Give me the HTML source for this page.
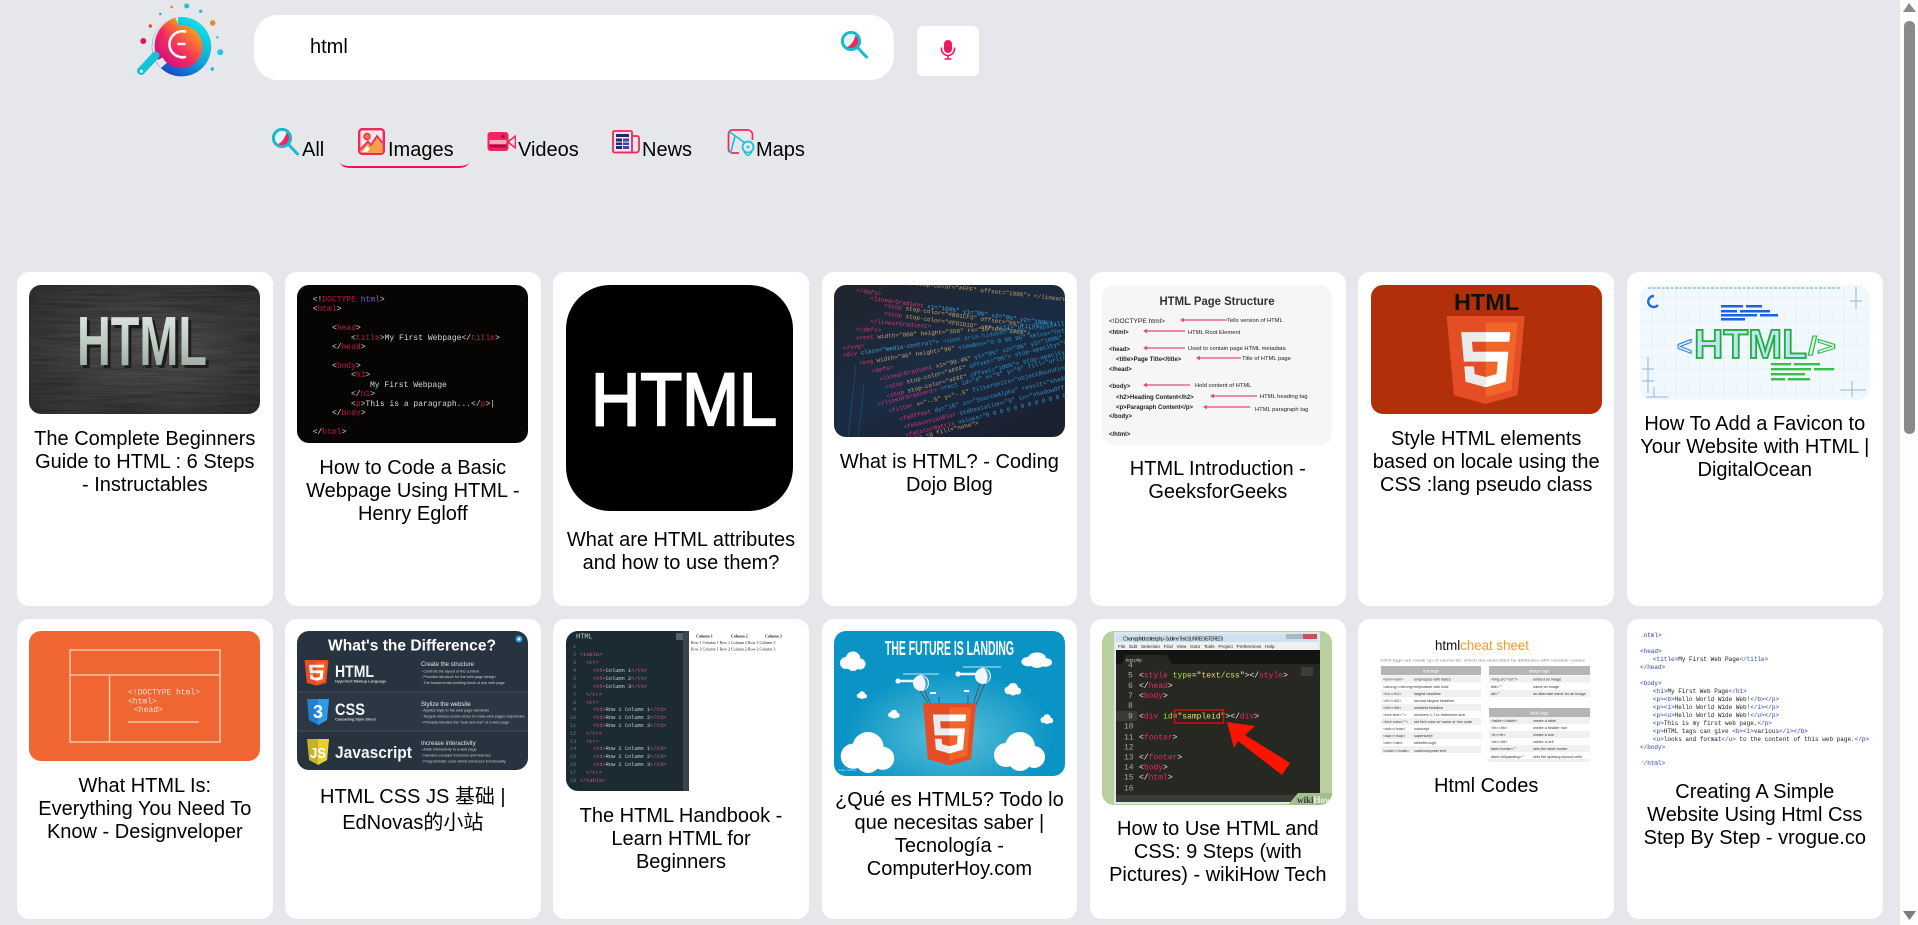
<!DOCTYPE html>
<html lang="en">
<head>
<meta charset="utf-8">
<title>html - Images</title>
<style>
*{box-sizing:border-box}
html,body{margin:0;padding:0;width:1918px;height:925px;overflow:hidden;background:#e5e7eb}
body{position:relative;font-family:"Liberation Sans","Noto Sans CJK SC",sans-serif;color:#000}
.abs{position:absolute}
.card{position:absolute;width:255.6px;background:#fff;border-radius:12px}
.r1{top:272px;height:334px}
.r2{top:619px;height:300px}
.t{position:absolute;display:block;border-radius:12px;overflow:hidden;filter:blur(.3px)}
.cap{position:absolute;width:255.6px;margin:0;text-align:center;font-size:20px;line-height:23px;white-space:nowrap;color:#000}
.tab{position:absolute;font-size:20px;line-height:23px;top:139px;white-space:nowrap;color:#000}
</style>
</head>
<body>
<svg width="0" height="0" style="position:absolute">
<defs>
<g id="h5">
<path fill="#E44D26" d="M71,460 L30,0 481,0 440,460 255,512"/>
<path fill="#F16529" d="M256,472 L405,431 440,37 256,37"/>
<path fill="#EBEBEB" d="M256,208 L181,208 176,150 256,150 256,94 255,94 114,94 115,109 129,265 256,265zM256,355 L255,355 192,338 188,293 158,293 132,293 139,382 255,414 256,414z"/>
<path fill="#FFF" d="M255,208 L255,265 325,265 318,338 255,355 255,414 371,382 372,372 385,223 387,208 371,208zM255,94 L255,150 392,150 393,138 396,109 397,94z"/>
</g>
<g id="cl"><circle cx="-7" cy="2" r="6" fill="#fff"/><circle cx="0" cy="-2" r="7.5" fill="#fff"/><circle cx="7" cy="3" r="5.5" fill="#fff"/><circle cx="0" cy="4" r="6" fill="#fff"/></g>
<g id="lens">
<circle cx="10" cy="10" r="8.6" fill="#e4f3f5"/>
<path d="M15 3A8.6 8.6 0 0 1 12 18.4 8 8 0 0 1 5 16.5 C10 15 13.5 9 15 3Z" fill="#f2255f"/>
<circle cx="10" cy="10" r="8.6" fill="none" stroke="#1ab9cf" stroke-width="3"/>
<path d="M16.5 16.5 25.5 26" stroke="#1ab9cf" stroke-width="3" stroke-linecap="round"/>
</g>
<linearGradient id="ringg" x1="0.85" y1="0.1" x2="0.25" y2="1"><stop offset="0" stop-color="#14e0e6"/><stop offset=".5" stop-color="#10a8d8"/><stop offset="1" stop-color="#1a3fc4"/></linearGradient>
<linearGradient id="leftg" x1="0.7" y1="0" x2="0.3" y2="1"><stop offset="0" stop-color="#f7941d"/><stop offset=".45" stop-color="#f5206a"/><stop offset="1" stop-color="#d1107a"/></linearGradient>
<linearGradient id="inng" x1="0.85" y1="0.1" x2="0.15" y2="0.9"><stop offset="0" stop-color="#f8a11e"/><stop offset=".55" stop-color="#f6305a"/><stop offset="1" stop-color="#d40f80"/></linearGradient>
<linearGradient id="silver" x1="0" y1="0" x2="0" y2="1"><stop offset="0" stop-color="#e8eee9"/><stop offset=".55" stop-color="#bcc8c0"/><stop offset="1" stop-color="#8d9a92"/></linearGradient>
<radialGradient id="gr1" cx=".5" cy=".5" r=".75"><stop offset="0" stop-color="#525252"/><stop offset="1" stop-color="#2c2c2c"/></radialGradient>
<radialGradient id="sky" cx=".5" cy=".72" r=".45"><stop offset="0" stop-color="#5cc0d8"/><stop offset="1" stop-color="#0a94c6"/></radialGradient>
<linearGradient id="cbg" x1="0" y1="0" x2=".7" y2="1"><stop offset="0" stop-color="#20242b"/><stop offset=".6" stop-color="#1a2c44"/><stop offset="1" stop-color="#1a2030"/></linearGradient>
<filter id="tx" x="0" y="0" width="100%" height="100%"><feTurbulence type="fractalNoise" baseFrequency=".015 .35" numOctaves="3" seed="4"/><feColorMatrix values="0 0 0 0 0  0 0 0 0 0  0 0 0 0 0  1.6 0 0 0 -.55"/></filter>
</defs>
</svg>

<!-- logo -->
<svg class="abs" style="left:120px;top:0" width="120" height="90" viewBox="0 0 120 90">
<circle cx="61.5" cy="46.7" r="29.7" fill="url(#ringg)"/>
<path d="M58 17 A30 30 0 0 0 41 68 L50 60 L58 30Z" fill="#e5e7eb"/>
<path d="M55.5 17.5 A30 30 0 0 0 38 60 L47 55 L60 30 Z" fill="url(#leftg)"/>
<path d="M35.5 55.5 L21 71" stroke="#14c3d6" stroke-width="8" stroke-linecap="round"/>
<circle cx="21.3" cy="71.3" r="1.5" fill="#fff"/>
<circle cx="61" cy="46.7" r="21.5" fill="url(#inng)"/>
<path d="M65 31.5 A13 13 0 1 0 65 57" fill="none" stroke="#fff" stroke-width="2.6" stroke-linecap="round"/>
<path d="M57.5 44 H65.5" stroke="#fff" stroke-width="2.4"/>
<circle cx="66.7" cy="6" r="2.5" fill="#16c4dc"/><circle cx="51.7" cy="7" r="1.4" fill="#e8892b"/><circle cx="40.3" cy="14" r="1.3" fill="#19b9cc"/><circle cx="80.7" cy="11.3" r="1.7" fill="#16c4dc"/><circle cx="92.7" cy="23" r="2.7" fill="#e08a20"/><circle cx="30.3" cy="26" r="1.7" fill="#ec4a2c"/><circle cx="23.3" cy="41" r="3" fill="#d81b60"/><circle cx="97.3" cy="37.3" r="1.2" fill="#2fb4c8"/><circle cx="100.3" cy="52.3" r="3" fill="#14cde0"/><circle cx="92.3" cy="69" r="1.7" fill="#14bcd4"/>
</svg>

<!-- search -->
<div class="abs" style="left:254px;top:15px;width:640px;height:65px;background:#fff;border-radius:24px"></div>
<div class="abs" style="left:310px;top:36px;font-size:20px;line-height:23px">html</div>
<svg class="abs" style="left:841px;top:31px" width="28" height="28" viewBox="0 0 28 28"><use href="#lens"/></svg>
<div class="abs" style="left:917px;top:26px;width:62px;height:50px;background:#fff;border-radius:6px"></div>
<svg class="abs" style="left:940px;top:39px" width="16" height="21" viewBox="0 0 16 21">
<rect x="4" y="1" width="8" height="13" rx="4" fill="#f5175f"/>
<path d="M1.5 8.5V10a6.5 6.5 0 0 0 13 0V8.5" fill="none" stroke="#f5175f" stroke-width="1.6"/>
<path d="M8 16.5V20M4.5 20H11.5" stroke="#f5175f" stroke-width="1.6"/>
</svg>

<!-- tabs -->
<svg class="abs" style="left:272px;top:128px" width="28" height="28" viewBox="0 0 28 28"><use href="#lens"/></svg>
<div class="tab" style="left:302px">All</div>
<svg class="abs" style="left:358px;top:128px" width="27" height="27" viewBox="0 0 27 27">
<rect x="1.2" y="1.2" width="24.6" height="24.6" rx="3" fill="#fbe8e2" stroke="#f0265f" stroke-width="2.4"/>
<circle cx="9" cy="8.5" r="3" fill="#f47a3c" stroke="#f0265f" stroke-width="1.4"/>
<path d="M3 22 10 14 13 17 19 8 24.5 16V25H3Z" fill="#f7a04a"/>
<path d="M2.5 21.5 10 13.5 13 17 19 8 24.5 15" fill="none" stroke="#f0265f" stroke-width="1.8"/>
<path d="M4 24 9 18 12 21 9 24Z" fill="#fff"/>
</svg>
<div class="tab" style="left:388px">Images</div>
<div class="abs" style="left:340px;top:150px;width:129px;height:18px;border-bottom:2.4px solid #f5105d;border-radius:0 0 10px 10px/0 0 6px 6px"></div>
<svg class="abs" style="left:487px;top:131px" width="29" height="21" viewBox="0 0 29 21">
<rect x="0.5" y="1" width="21" height="19" rx="3" fill="#f0265f"/>
<rect x="2.5" y="9" width="17" height="4" fill="#f7a9bd"/>
<rect x="2.5" y="14" width="17" height="2.5" fill="#a80f4a"/>
<circle cx="16" cy="5.5" r="1.7" fill="#a80f4a"/>
<path d="M22 10 28.5 5V17L22 12Z" fill="#fbe2e8" stroke="#f0265f" stroke-width="1.6"/>
</svg>
<div class="tab" style="left:518px">Videos</div>
<svg class="abs" style="left:612px;top:130px" width="28" height="24" viewBox="0 0 28 24">
<rect x="1" y="1" width="19" height="21.5" rx="1.5" fill="#fbe4ea" stroke="#f0265f" stroke-width="1.8"/>
<path d="M20 6H25A2 2 0 0 1 27 8V20A3 3 0 0 1 24 22.5H5" fill="none" stroke="#f0265f" stroke-width="1.8"/>
<rect x="4" y="4" width="13" height="3" fill="#1e2a78"/>
<rect x="4" y="8.5" width="6" height="10.5" fill="#1e2a78"/>
<rect x="11" y="8.5" width="6" height="10.5" fill="#3a4a9c"/>
<path d="M4 12H17M4 15.5H17" stroke="#fbe4ea" stroke-width="1"/>
</svg>
<div class="tab" style="left:642px">News</div>
<svg class="abs" style="left:727px;top:128px" width="28" height="28" viewBox="0 0 28 28">
<path d="M6 2H21A5 5 0 0 1 25.5 6V12M1.5 6A4 4 0 0 1 6 2M1.5 6V21A4 4 0 0 0 6 25H12" fill="none" stroke="#f0265f" stroke-width="1.7"/>
<path d="M1.5 3 18 15M8 8 3.5 25.5" fill="none" stroke="#1cc2da" stroke-width="1.7"/>
<circle cx="21" cy="19" r="5.5" fill="#e5e7eb" stroke="#1cc2da" stroke-width="1.8"/>
<circle cx="21" cy="19" r="1.4" fill="#1cc2da"/>
<path d="M17 24 21 28 25 24" fill="none" stroke="#1cc2da" stroke-width="1.4"/>
</svg>
<div class="tab" style="left:756px">Maps</div>

<!-- cards -->
<div class="card r1" style="left:17px"></div>
<div class="card r1" style="left:285px"></div>
<div class="card r1" style="left:553.2px"></div>
<div class="card r1" style="left:821.6px"></div>
<div class="card r1" style="left:1090px"></div>
<div class="card r1" style="left:1358.4px"></div>
<div class="card r1" style="left:1627px"></div>
<div class="card r2" style="left:17px"></div>
<div class="card r2" style="left:285px"></div>
<div class="card r2" style="left:553.2px"></div>
<div class="card r2" style="left:821.6px"></div>
<div class="card r2" style="left:1090px"></div>
<div class="card r2" style="left:1358.4px"></div>
<div class="card r2" style="left:1627px"></div>

<!-- R1 C1 -->
<svg class="t" style="left:29px;top:285px" width="231" height="129" viewBox="0 0 231 129">
<rect width="231" height="129" fill="url(#gr1)"/>
<rect width="231" height="129" filter="url(#tx)" opacity=".35"/>
<text x="51" y="83" font-size="70" font-weight="700" textLength="130" lengthAdjust="spacingAndGlyphs" fill="#1b1d1c">HTML</text>
<text x="48" y="80" font-size="70" font-weight="700" textLength="130" lengthAdjust="spacingAndGlyphs" fill="url(#silver)">HTML</text>
</svg>
<p class="cap" style="left:17px;top:427.5px">The Complete Beginners<br>Guide to HTML : 6 Steps<br>- Instructables</p>

<!-- R1 C2 -->
<svg class="t" style="left:297px;top:285px" width="231" height="158" viewBox="0 0 231 158">
<rect width="231" height="158" fill="#060504"/>
<g font-size="8" fill="#d8d8d8" style="font-family:'Liberation Mono',monospace">
<text x="15.7" y="16.5">&lt;!<tspan fill="#c8124e">DOCTYPE</tspan> <tspan fill="#7c5fd0">html</tspan>&gt;</text>
<text x="15.7" y="26">&lt;<tspan fill="#c8124e">html</tspan>&gt;</text>
<text x="35" y="45">&lt;<tspan fill="#c8124e">head</tspan>&gt;</text>
<text x="54" y="55">&lt;<tspan fill="#c8124e">title</tspan>&gt;My First Webpage&lt;/<tspan fill="#c8124e">title</tspan>&gt;</text>
<text x="35" y="64">&lt;/<tspan fill="#c8124e">head</tspan>&gt;</text>
<text x="35" y="83">&lt;<tspan fill="#c8124e">body</tspan>&gt;</text>
<text x="54" y="92">&lt;<tspan fill="#c8124e">h1</tspan>&gt;</text>
<text x="73" y="102">My First Webpage</text>
<text x="54" y="111">&lt;/<tspan fill="#c8124e">h1</tspan>&gt;</text>
<text x="54" y="121">&lt;<tspan fill="#c8124e">p</tspan>&gt;This is a paragraph...&lt;/<tspan fill="#c8124e">p</tspan>&gt;|</text>
<text x="35" y="130">&lt;/<tspan fill="#c8124e">body</tspan>&gt;</text>
<text x="15.7" y="149">&lt;/<tspan fill="#c8124e">html</tspan>&gt;</text>
</g>
</svg>
<p class="cap" style="left:285px;top:456.5px">How to Code a Basic<br>Webpage Using HTML -<br>Henry Egloff</p>

<!-- R1 C3 -->
<svg class="t" style="left:566px;top:285px;border-radius:44px" width="227" height="226" viewBox="0 0 227 226">
<rect width="227" height="226" fill="#000"/>
<text x="25" y="140" font-size="74" fill="#fff" stroke="#fff" stroke-width="2.2" textLength="186" lengthAdjust="spacingAndGlyphs">HTML</text>
</svg>
<p class="cap" style="left:553.2px;top:528.5px">What are HTML attributes<br>and how to use them?</p>

<!-- R1 C4 -->
<svg class="t" style="left:834px;top:285px" width="231" height="152" viewBox="0 0 231 152">
<rect width="231" height="152" fill="url(#cbg)"/>
<g font-size="6" style="font-family:'Liberation Mono',monospace">
<text x="60" y="-2" transform="rotate(6 60 0)" fill="#c9a06a">&lt;stop stop-color="#FFF" offset="100%"&gt; &lt;/linearGradient&gt;</text>
<text x="22" y="7" transform="rotate(8 22 7)" fill="#e0357a">&lt;/defs&gt;</text>
<text x="36" y="15" transform="rotate(8 36 15)" fill="#e0357a">&lt;linearGradient <tspan fill="#3ea6d8">x1="100%" y1="0%" x2="0%" y2="100%"</tspan></text>
<text x="50" y="22" transform="rotate(8 50 22)" fill="#e0357a">&lt;stop <tspan fill="#c9a06a">stop-color="#B01CF3" offset="0%"&gt;</tspan></text>
<text x="50" y="30" transform="rotate(8 50 30)" fill="#e0357a">&lt;stop <tspan fill="#c9a06a">stop-color="#FD1D1D" offset="100%"&gt;</tspan></text>
<text x="36" y="38" transform="rotate(5 36 38)" fill="#e0357a">&lt;/linearGradient&gt;</text>
<text x="22" y="46" transform="rotate(2 22 46)" fill="#e0357a">&lt;/defs&gt;</text>
<text x="22" y="55" transform="rotate(-4 22 55)" fill="#e0357a">&lt;rect <tspan fill="#c9a06a">width="800" height="350" rx="10" </tspan><tspan fill="#3ea6d8">fill="url(#a)" fill-rule="evenodd" mask="url(#b)"</tspan></text>
<text x="9" y="65" transform="rotate(-7 9 65)" fill="#e0357a">&lt;/svg&gt;</text>
<text x="9" y="72" transform="rotate(-8 9 72)" fill="#e0357a">&lt;div <tspan fill="#3ea6d8">class="media-control"&gt; </tspan><tspan fill="#2b80b5">&lt;span aria-hidden="true"&gt;&lt;/span&gt;</tspan></text>
<text x="25" y="80" transform="rotate(-9 25 80)" fill="#e0357a">&lt;svg <tspan fill="#c9a06a">width="96" height="96" </tspan><tspan fill="#2f95cc">viewBox="0 0 96 96" xmlns="http://"</tspan></text>
<text x="38" y="88" transform="rotate(-11 38 88)" fill="#e0357a">&lt;defs&gt;</text>
<text x="46" y="96" transform="rotate(-13 46 96)" fill="#e0357a">&lt;linearGradient <tspan fill="#c9a06a">x1="99.4%" </tspan><tspan fill="#2f95cc">y1="0%" x2="0%" y2="100%" id="c"&gt;</tspan></text>
<text x="52" y="104" transform="rotate(-14 52 104)" fill="#e0357a">&lt;stop <tspan fill="#c9a06a">stop-color="#FFF" </tspan><tspan fill="#2f95cc">offset="0%"&gt; stop-opacity="0.8"</tspan></text>
<text x="53" y="113" transform="rotate(-14 53 113)" fill="#e0357a">&lt;stop <tspan fill="#c9a06a">stop-color="#FFF" </tspan><tspan fill="#2f95cc">offset="100%"&gt; stop-opacity="0"</tspan></text>
<text x="44" y="121" transform="rotate(-14 44 121)" fill="#e0357a">&lt;/linearGradient&gt; <tspan fill="#2f95cc">&lt;rect id="d" x="0" y="0" fill="url(#c)"</tspan></text>
<text x="55" y="128" transform="rotate(-14 55 128)" fill="#e0357a">&lt;filter <tspan fill="#c9a06a">x="-.5" y="-.5" </tspan><tspan fill="#2f95cc">filterUnits="objectBoundingBox" id="e"&gt;</tspan></text>
<text x="66" y="136" transform="rotate(-14 66 136)" fill="#e0357a">&lt;feOffset <tspan fill="#2f95cc">dy="16" in="SourceAlpha" result="shadowOffsetOuter1"/&gt;</tspan></text>
<text x="70" y="144" transform="rotate(-14 70 144)" fill="#e0357a">&lt;feGaussianBlur <tspan fill="#2f95cc">stdDeviation="8" in="shadowOffsetOuter1"/&gt;</tspan></text>
<text x="72" y="152" transform="rotate(-14 72 152)" fill="#e0357a">&lt;feColorMatrix <tspan fill="#2f95cc">values="0 0 0 0 0 0 0 0 0 0 0 0 0 0 0"/&gt;</tspan></text>
<text x="57" y="160" transform="rotate(-13 57 160)" fill="#e0357a">&lt;/filter&gt; <tspan fill="#c9a06a">&lt;g fill="none"&gt;</tspan></text>
</g>
<path d="M22 80 14 152M30 100 24 152" stroke="#2a6a96" stroke-width=".6" opacity=".7"/>
</svg>
<p class="cap" style="left:821.6px;top:450.5px">What is HTML? - Coding<br>Dojo Blog</p>

<!-- R1 C5 -->
<svg class="t" style="left:1102px;top:285px" width="230" height="160" viewBox="0 0 230 160">
<rect width="230" height="160" fill="#f6f6f6"/>
<text x="115" y="20" text-anchor="middle" font-size="11.5" font-weight="700" fill="#333" textLength="115" lengthAdjust="spacingAndGlyphs">HTML Page Structure</text>
<g font-size="6" fill="#222">
<text x="7" y="38" textLength="56" lengthAdjust="spacingAndGlyphs">&lt;!DOCTYPE html&gt;</text>
<text x="7" y="49" font-weight="700">&lt;html&gt;</text>
<text x="7" y="66" font-weight="700">&lt;head&gt;</text>
<text x="14" y="76" font-weight="700">&lt;title&gt;Page Title&lt;/title&gt;</text>
<text x="7" y="86" font-weight="700">&lt;/head&gt;</text>
<text x="7" y="103" font-weight="700">&lt;body&gt;</text>
<text x="14" y="114" font-weight="700">&lt;h2&gt;Heading Content&lt;/h2&gt;</text>
<text x="14" y="124" font-weight="700">&lt;p&gt;Paragraph Content&lt;/p&gt;</text>
<text x="7" y="133" font-weight="700">&lt;/body&gt;</text>
<text x="7" y="151" font-weight="700">&lt;/html&gt;</text>
<text x="125" y="37" font-size="5.8">Tells version of HTML</text>
<text x="86" y="49" font-size="5.8">HTML Root Element</text>
<text x="86" y="65" font-size="5.8">Used to contain  page HTML metadata</text>
<text x="140" y="75" font-size="5.8">Title of HTML page</text>
<text x="93" y="102" font-size="5.8">Hold content of HTML</text>
<text x="158" y="113" font-size="5.8">HTML heading tag</text>
<text x="153" y="126" font-size="5.8">HTML paragraph tag</text>
</g>
<g stroke="#e24a86" stroke-width="1.2" fill="#e24a86">
<path d="M79 35H125M42 46H83M42 63H83M95 73H139M42 100H88M109 111H155M102 122H148"/>
<path stroke="none" d="M78 35l4-2.2v4.4zM41 46l4-2.2v4.4zM41 63l4-2.2v4.4zM94 73l4-2.2v4.4zM41 100l4-2.2v4.4zM108 111l4-2.2v4.4zM101 122l4-2.2v4.4z"/>
</g>
</svg>
<p class="cap" style="left:1090px;top:457.5px">HTML Introduction -<br>GeeksforGeeks</p>

<!-- R1 C6 -->
<svg class="t" style="left:1371px;top:285px" width="231" height="129" viewBox="0 0 231 129">
<rect width="231" height="129" fill="#b13009"/>
<text x="83" y="25" font-size="23" font-weight="700" fill="#111" textLength="65" lengthAdjust="spacingAndGlyphs">HTML</text>
<use href="#h5" transform="translate(70.5 31) scale(.173 .172)"/>
</svg>
<p class="cap" style="left:1358.4px;top:427.5px">Style HTML elements<br>based on locale using the<br>CSS :lang pseudo class</p>

<!-- R1 C7 -->
<svg class="t" style="left:1640px;top:285px" width="230" height="115" viewBox="0 0 230 115">
<rect width="230" height="115" fill="#f1f8fe"/>
<g stroke="#deedf9" stroke-width=".5"><path d="M0 12H230M0 24H230M0 36H230M0 48H230M0 60H230M0 72H230M0 84H230M0 96H230M0 108H230M12 0V115M24 0V115M36 0V115M48 0V115M60 0V115M72 0V115M84 0V115M96 0V115M108 0V115M120 0V115M132 0V115M144 0V115M156 0V115M168 0V115M180 0V115M192 0V115M204 0V115M216 0V115"/></g>
<path d="M8 3H200" stroke="#a9cbe6" stroke-width="2" stroke-dasharray="3 1.5"/>
<path d="M216 2V24M210 16H222M8 72V108M2 84H14M2 96H14M6 112H28M14 102V112M200 105H226M212 96V112" stroke="#8fb6d8" stroke-width="1"/>
<path d="M14 11A5.5 5.5 0 1 0 18 20" fill="none" stroke="#1a6fe0" stroke-width="2.4"/>
<g fill="#1c62e0"><rect x="81" y="20" width="22" height="2.5"/><rect x="106" y="20" width="16" height="2.5"/><rect x="81" y="25" width="16" height="2.5"/><rect x="100" y="25" width="30" height="2.5"/><rect x="81" y="29" width="36" height="2.5"/><rect x="120" y="29" width="18" height="2.5"/><rect x="81" y="33" width="24" height="2.5"/></g>
<text x="37" y="70" font-size="26" font-weight="700" fill="#d4ecfb" stroke="#2c7be0" stroke-width="1">&lt;</text>
<text x="54" y="73" font-size="41" font-weight="700" fill="#bfe4f4" stroke="#1fae3a" stroke-width="1.8" textLength="113" lengthAdjust="spacingAndGlyphs">HTML</text>
<text x="168" y="70" font-size="26" font-weight="700" fill="#e0f7e0" stroke="#2bb84a" stroke-width="1" textLength="28" lengthAdjust="spacingAndGlyphs">/&gt;</text>
<g fill="#35c04a"><rect x="131" y="78" width="20" height="2.4"/><rect x="154" y="78" width="26" height="2.4"/><rect x="131" y="83" width="40" height="2.4"/><rect x="174" y="83" width="20" height="2.4"/><rect x="131" y="88" width="34" height="2.4"/><rect x="131" y="93" width="14" height="2.4"/><rect x="148" y="93" width="22" height="2.4"/></g>
</svg>
<p class="cap" style="left:1627px;top:412.5px">How To Add a Favicon to<br>Your Website with HTML |<br>DigitalOcean</p>

<!-- R2 C1 -->
<svg class="t" style="left:29px;top:631px" width="231" height="130" viewBox="0 0 231 130">
<rect width="231" height="130" fill="#f06632"/>
<g fill="none" stroke="#fbc4a6" stroke-width="1.5"><rect x="41" y="19" width="150" height="92"/><path d="M41 44H191M80.5 44V111M99 91H170"/></g>
<g font-size="8" fill="#fde0d0" style="font-family:'Liberation Mono',monospace"><text x="99" y="63.5">&lt;!DOCTYPE html&gt;</text><text x="99" y="72.5">&lt;html&gt;</text><text x="105" y="81">&lt;head&gt;</text></g>
</svg>
<p class="cap" style="left:17px;top:774.5px">What HTML Is:<br>Everything You Need To<br>Know - Designveloper</p>

<!-- R2 C2 -->
<svg class="t" style="left:297px;top:631px" width="231" height="139" viewBox="0 0 231 139">
<rect width="231" height="139" fill="#27333e"/>
<rect y="61" width="231" height="39" fill="#2b3843"/>
<path d="M0 61H231M0 100H231" stroke="#4a5560" stroke-width=".8"/>
<text x="31" y="19.5" font-size="15.5" font-weight="700" fill="#fff" textLength="168" lengthAdjust="spacingAndGlyphs">What's the Difference?</text>
<circle cx="222" cy="8" r="3.5" fill="#2a9ee8"/><circle cx="222" cy="8" r="1.4" fill="#e8f6ff"/>
<use href="#h5" transform="translate(6 29) scale(.053 .05)"/>
<path d="M10 68H32L30 89 21 94 12 89Z" fill="#1f7fd0"/><path d="M21 68H32L30 89 21 94Z" fill="#2f9be8"/><text x="21" y="87" text-anchor="middle" font-size="18" font-weight="700" fill="#fff">3</text>
<path d="M10 108H32L30 129 21 134 12 129Z" fill="#c8b02a"/><path d="M21 108H32L30 129 21 134Z" fill="#e8d030"/><text x="21" y="127" text-anchor="middle" font-size="15" font-weight="700" fill="#fff" textLength="16" lengthAdjust="spacingAndGlyphs">JS</text>
<g font-weight="700" fill="#f2f4f5">
<text x="38" y="46" font-size="17" textLength="39" lengthAdjust="spacingAndGlyphs">HTML</text>
<text x="38" y="84" font-size="17" textLength="30" lengthAdjust="spacingAndGlyphs">CSS</text>
<text x="38" y="127" font-size="17" textLength="77" lengthAdjust="spacingAndGlyphs">Javascript</text>
</g>
<g fill="#ccd2d6" font-size="3.8">
<text x="38" y="51.5" font-weight="700">Hypertext Markup Language</text>
<text x="38" y="89.5" font-weight="700">Cascading Style Sheet</text>
<g font-size="6" fill="#e4e7e9"><text x="124" y="35">Create the structure</text><text x="124" y="75">Stylize the website</text><text x="124" y="114">Increase interactivity</text></g>
<text x="124" y="41.5">- Controls the layout of the content</text>
<text x="124" y="47">- Provides structure for the web page design</text>
<text x="124" y="53">- The fundamental building block of any web page</text>
<text x="124" y="80.5">- Applies style to the web page elements</text>
<text x="124" y="86.5">- Targets various screen sizes to make web pages responsive</text>
<text x="124" y="92.5">- Primarily handles the "look and feel" of a web page</text>
<text x="124" y="119.5">- Adds interactivity to a web page</text>
<text x="124" y="125.5">- Handles complex functions and features</text>
<text x="124" y="131.5">- Programmatic code which enhances functionality</text>
</g>
</svg>
<p class="cap" style="left:285px;top:784px;line-height:26px">HTML CSS JS 基础 |<br>EdNovas的小站</p>

<!-- R2 C3 -->
<svg class="t" style="left:566px;top:631px" width="227" height="160" viewBox="0 0 227 160">
<rect width="227" height="160" fill="#fff"/>
<rect width="117" height="160" fill="#1c2b33"/>
<rect x="117" width="6" height="160" fill="#3d4449"/>
<rect x="110" y="2" width="7" height="7" fill="#55606a"/>
<g font-size="5.3" fill="#c6d0d4" style="font-family:'Liberation Mono',monospace">
<text x="10" y="7.5" font-size="7">HTML</text>
<g fill="#667880"><text x="7" y="17">1</text><text x="7" y="25">2</text><text x="7" y="33">3</text><text x="7" y="41">4</text><text x="7" y="49">5</text><text x="7" y="57">6</text><text x="7" y="65">7</text><text x="7" y="73">8</text><text x="7" y="80">9</text><text x="4" y="88">10</text><text x="4" y="96">11</text><text x="4" y="104">12</text><text x="4" y="112">13</text><text x="4" y="119">14</text><text x="4" y="127">15</text><text x="4" y="135">16</text><text x="4" y="143">17</text><text x="4" y="151">18</text></g>
<g fill="#c95a70"><text x="14" y="25">&lt;table&gt;</text><text x="20" y="33">&lt;tr&gt;</text><text x="20" y="65">&lt;/tr&gt;</text><text x="20" y="73">&lt;tr&gt;</text><text x="20" y="104">&lt;/tr&gt;</text><text x="20" y="112">&lt;tr&gt;</text><text x="20" y="143">&lt;/tr&gt;</text><text x="14" y="151">&lt;/table&gt;</text></g>
<text x="27" y="41"><tspan fill="#c95a70">&lt;th&gt;</tspan>Column 1<tspan fill="#c95a70">&lt;/th&gt;</tspan></text>
<text x="27" y="49"><tspan fill="#c95a70">&lt;th&gt;</tspan>Column 2<tspan fill="#c95a70">&lt;/th&gt;</tspan></text>
<text x="27" y="57"><tspan fill="#c95a70">&lt;th&gt;</tspan>Column 3<tspan fill="#c95a70">&lt;/th&gt;</tspan></text>
<text x="27" y="80"><tspan fill="#c95a70">&lt;td&gt;</tspan>Row 1 Column 1<tspan fill="#c95a70">&lt;/td&gt;</tspan></text>
<text x="27" y="88"><tspan fill="#c95a70">&lt;td&gt;</tspan>Row 1 Column 2<tspan fill="#c95a70">&lt;/td&gt;</tspan></text>
<text x="27" y="96"><tspan fill="#c95a70">&lt;td&gt;</tspan>Row 1 Column 3<tspan fill="#c95a70">&lt;/td&gt;</tspan></text>
<text x="27" y="119"><tspan fill="#c95a70">&lt;td&gt;</tspan>Row 2 Column 1<tspan fill="#c95a70">&lt;/td&gt;</tspan></text>
<text x="27" y="127"><tspan fill="#c95a70">&lt;td&gt;</tspan>Row 2 Column 2<tspan fill="#c95a70">&lt;/td&gt;</tspan></text>
<text x="27" y="135"><tspan fill="#c95a70">&lt;td&gt;</tspan>Row 2 Column 3<tspan fill="#c95a70">&lt;/td&gt;</tspan></text>
</g>
<g font-size="4" fill="#222" style="font-family:'Liberation Serif',serif">
<g font-weight="700"><text x="130" y="6.5">Column 1</text><text x="165" y="6.5">Column 2</text><text x="199" y="6.5">Column 3</text></g>
<text x="125" y="13">Row 1 Column 1 Row 1 Column 2 Row 1 Column 3</text>
<text x="125" y="19.5">Row 2 Column 1 Row 2 Column 2 Row 2 Column 3</text>
</g>
</svg>
<p class="cap" style="left:553.2px;top:804.5px">The HTML Handbook -<br>Learn HTML for<br>Beginners</p>

<!-- R2 C4 -->
<svg class="t" style="left:834px;top:631px" width="231" height="145" viewBox="0 0 231 145">
<rect width="231" height="145" fill="url(#sky)"/>
<text x="51" y="24" font-size="20" font-weight="700" fill="#fff" textLength="129" lengthAdjust="spacingAndGlyphs">THE FUTURE IS LANDING</text>
<use href="#cl" transform="translate(19 30)"/>
<use href="#cl" transform="translate(203 29) scale(1.2 .8)"/>
<use href="#cl" transform="translate(28 64) scale(.4)"/>
<use href="#cl" transform="translate(179 58) scale(.65)"/>
<use href="#cl" transform="translate(60 83) scale(.45)"/>
<use href="#cl" transform="translate(213 88) scale(.5)"/>
<use href="#cl" transform="translate(34 121) scale(2.1)"/>
<use href="#cl" transform="translate(186 120) scale(2)"/>
<path d="M85 58 95 74M90 58 97 74M146 52 139 74M151 52 142 74M105 66V74M134 64V74" stroke="#5a3a2a" stroke-width=".7"/>
<g><path d="M69 43H105M87 43V48" stroke="#cfe6ef" stroke-width="1"/><path d="M64 50H82" stroke="#f0f6f8" stroke-width="2.5"/><circle cx="64" cy="50" r="2.6" fill="#f0f6f8"/><circle cx="87" cy="52" r="8" fill="#f2f6f8"/><path d="M88 44.5a8 8 0 0 1 2 14.5 12 12 0 0 0-2-14.5z" fill="#2e9ad8"/></g>
<g><path d="M129 36H167M149 36V41" stroke="#cfe6ef" stroke-width="1"/><path d="M124 43H142" stroke="#f0f6f8" stroke-width="2.5"/><circle cx="124" cy="43" r="2.6" fill="#f0f6f8"/><circle cx="149" cy="45" r="8" fill="#f2f6f8"/><path d="M150 37.5a8 8 0 0 1 2 14.5 12 12 0 0 0-2-14.5z" fill="#2e9ad8"/></g>
<path d="M96 62H103M130 60H137" stroke="#f4f8fa" stroke-width="2"/><circle cx="104" cy="62" r="2" fill="#2e9ad8"/><circle cx="137" cy="60" r="2" fill="#2e9ad8"/>
<use href="#h5" transform="translate(85.5 72) scale(.1175 .122)"/>
<text x="4" y="140" font-size="2.5" fill="#bfe2ee">Image credit line</text>
</svg>
<p class="cap" style="left:821.6px;top:788.5px">¿Qué es HTML5? Todo lo<br>que necesitas saber |<br>Tecnología -<br>ComputerHoy.com</p>

<!-- R2 C5 -->
<svg class="t" style="left:1102px;top:631px" width="230" height="174" viewBox="0 0 230 174">
<rect width="230" height="174" fill="#b9cfa0"/>
<rect x="12" y="1" width="206" height="172" fill="#dbe8f2"/>
<rect x="14" y="3" width="202" height="8" fill="#cfe0ee"/>
<text x="21" y="9.5" font-size="5" fill="#222" textLength="100">C:\xampp\htdocs\test.php - Sublime Text 2 (UNREGISTERED)</text>
<rect x="184" y="3" width="17" height="5" fill="#a8b8c4"/><rect x="201" y="3" width="14" height="5" fill="#c8505a"/>
<rect x="14" y="11" width="202" height="8" fill="#f0f0f0"/>
<text x="16" y="17" font-size="4.6" fill="#222" xml:space="preserve">File   Edit   Selection   Find   View   Goto   Tools   Project   Preferences   Help</text>
<rect x="14" y="19" width="204" height="148" fill="#272822"/>
<rect x="14" y="19" width="204" height="14" fill="#141412"/>
<path d="M20 33 24 24H64L70 33Z" fill="#272822"/>
<text x="24" y="30.5" font-size="4.4" fill="#ddd">test.php</text>
<rect x="14" y="80" width="21" height="10" fill="#3a3b35"/>
<rect x="199" y="36" width="12" height="9" fill="#3c3d37"/>
<rect x="14" y="164" width="204" height="7" fill="#3a3c36"/>
<g font-size="8" style="font-family:'Liberation Mono',monospace">
<g fill="#a8a89c"><text x="26" y="36.5">4</text><text x="26" y="46.5">5</text><text x="26" y="57">6</text><text x="26" y="67">7</text><text x="26" y="77">8</text><text x="26" y="87.5">9</text><text x="22" y="97.5">10</text><text x="22" y="108.5">11</text><text x="22" y="118.5">12</text><text x="22" y="128.5">13</text><text x="22" y="138.5">14</text><text x="22" y="148.5">15</text><text x="22" y="159.5">16</text></g>
<g fill="#f0f0e8">
<text x="37" y="46.5">&lt;<tspan fill="#f0226e">style</tspan> <tspan fill="#a6e22e">type</tspan>="<tspan fill="#e6db74">text/css</tspan>"&gt;&lt;/<tspan fill="#f0226e">style</tspan>&gt;</text>
<text x="37" y="57">&lt;/<tspan fill="#f0226e">head</tspan>&gt;</text>
<text x="37" y="67">&lt;<tspan fill="#f0226e">body</tspan>&gt;</text>
<text x="37" y="87.5">&lt;<tspan fill="#f0226e">div</tspan> <tspan fill="#a6e22e">id</tspan>=<tspan fill="#e6db74">"sampleid"</tspan>&gt;&lt;/<tspan fill="#f0226e">div</tspan>&gt;</text>
<text x="37" y="108.5">&lt;<tspan fill="#f0226e">footer</tspan>&gt;</text>
<text x="37" y="128.5">&lt;/<tspan fill="#f0226e">footer</tspan>&gt;</text>
<text x="37" y="138.5">&lt;<tspan fill="#f0226e">body</tspan>&gt;</text>
<text x="37" y="148.5">&lt;/<tspan fill="#f0226e">html</tspan>&gt;</text>
</g></g>
<rect x="72.5" y="79" width="49" height="13" fill="none" stroke="#d81010" stroke-width="1.4"/>
<path d="M125 91 153 95 143 104 188 132 180 144 136 110 132 117Z" fill="#fb1400"/>
<path d="M186 174 196 162H230V174Z" fill="#a5bf8c"/>
<text x="195" y="172" font-size="9" font-weight="700" fill="#334" style="font-family:'Liberation Serif',serif">wiki<tspan fill="#eef5e8">How</tspan></text>
</svg>
<p class="cap" style="left:1090px;top:817.5px">How to Use HTML and<br>CSS: 9 Steps (with<br>Pictures) - wikiHow Tech</p>

<!-- R2 C6 -->
<svg class="t" style="left:1371px;top:631px" width="231" height="133" viewBox="0 0 231 133">
<rect width="231" height="133" fill="#fff"/>
<text x="64" y="19" font-size="14" textLength="94" lengthAdjust="spacingAndGlyphs" fill="#111">html<tspan fill="#f49b1f">cheat sheet</tspan></text>
<text x="10" y="30.5" font-size="3.8" fill="#888" textLength="204" lengthAdjust="spacingAndGlyphs">Html tags are made up of elements, which are described by attributes with variable values</text>
<rect x="10" y="35" width="100" height="9" fill="#b5b5b5"/><rect x="118" y="35" width="101" height="9" fill="#b5b5b5"/><rect x="118" y="77" width="101" height="9" fill="#b5b5b5"/>
<g fill="#f0f0f0"><rect x="10" y="44.5" width="100" height="7"/><rect x="10" y="59" width="100" height="7"/><rect x="10" y="73" width="100" height="7"/><rect x="10" y="87" width="100" height="7"/><rect x="10" y="101" width="100" height="7"/><rect x="10" y="115" width="100" height="7"/><rect x="118" y="44.5" width="101" height="7"/><rect x="118" y="59" width="101" height="7"/><rect x="118" y="86" width="101" height="7"/><rect x="118" y="100" width="101" height="7"/><rect x="118" y="114" width="101" height="7"/><rect x="118" y="128" width="101" height="3"/></g>
<g font-size="4.2" fill="#fff" text-anchor="middle"><text x="60" y="41.5">text tags</text><text x="168" y="41.5">image tags</text><text x="168" y="83.5">table tags</text></g>
<g font-size="3.8" fill="#333">
<text x="12" y="49.5">&lt;em&gt;&lt;/em&gt;</text><text x="43" y="49.5">emphasize with italics</text>
<text x="12" y="57">&lt;strong&gt;&lt;/strong&gt;</text><text x="43" y="57">emphasize with bold</text>
<text x="12" y="64">&lt;h1&gt;&lt;/h1&gt;</text><text x="43" y="64">largest headline</text>
<text x="12" y="71">&lt;h2&gt;&lt;/h2&gt;</text><text x="43" y="71">second largest headline</text>
<text x="12" y="78">&lt;h6&gt;&lt;/h6&gt;</text><text x="43" y="78">smallest headline</text>
<text x="12" y="85">&lt;font size=""&gt;</text><text x="43" y="85">numbers 1-7 to determine size</text>
<text x="12" y="92">&lt;font color=""&gt;</text><text x="43" y="92">set font color w/ name or hex code</text>
<text x="12" y="99">&lt;sub&gt;&lt;/sub&gt;</text><text x="43" y="99">subscript</text>
<text x="12" y="106">&lt;sup&gt;&lt;/sup&gt;</text><text x="43" y="106">superscript</text>
<text x="12" y="113">&lt;del&gt;&lt;/del&gt;</text><text x="43" y="113">strikethrough</text>
<text x="12" y="121">&lt;code&gt;&lt;/code&gt;</text><text x="43" y="121">code/computer text</text>
<text x="120" y="49.5">&lt;img src="url"/&gt;</text><text x="162" y="49.5">embed an image</text>
<text x="120" y="57">title=""</text><text x="162" y="57">name an image</text>
<text x="120" y="64">alt=""</text><text x="162" y="64">an alternate name for an image</text>
<text x="120" y="91">&lt;table&gt;&lt;/table&gt;</text><text x="162" y="91">create a table</text>
<text x="120" y="98">&lt;th&gt;&lt;/th&gt;</text><text x="162" y="98">create a header row</text>
<text x="120" y="105">&lt;tr&gt;&lt;/tr&gt;</text><text x="162" y="105">create a row</text>
<text x="120" y="112">&lt;td&gt;&lt;/td&gt;</text><text x="162" y="112">create a cell</text>
<text x="120" y="119">table border=""</text><text x="162" y="119">sets the table border</text>
<text x="120" y="127">table cellpadding=""</text><text x="162" y="127">sets the spacing around cells</text>
</g>
</svg>
<p class="cap" style="left:1358.4px;top:774.5px">Html Codes</p>

<!-- R2 C7 -->
<svg class="t" style="left:1640px;top:631px" width="230" height="137" viewBox="0 0 230 137">
<rect width="230" height="137" fill="#fff"/>
<g font-size="6" fill="#222" style="font-family:'Liberation Mono',monospace">
<g fill="#2a3fd0"><text x="0" y="6">&lt;html&gt;</text><text x="0" y="22">&lt;head&gt;</text><text x="0" y="38">&lt;/head&gt;</text><text x="0" y="54">&lt;body&gt;</text><text x="0" y="118">&lt;/body&gt;</text><text x="0" y="134">&lt;/html&gt;</text></g>
<text x="13" y="30"><tspan fill="#2a3fd0">&lt;title&gt;</tspan>My First Web Page<tspan fill="#2a3fd0">&lt;/title&gt;</tspan></text>
<text x="13" y="62"><tspan fill="#2a3fd0">&lt;h1&gt;</tspan>My First Web Page<tspan fill="#2a3fd0">&lt;/h1&gt;</tspan></text>
<text x="13" y="70"><tspan fill="#2a3fd0">&lt;p&gt;&lt;b&gt;</tspan>Hello World Wide Web!<tspan fill="#2a3fd0">&lt;/b&gt;&lt;/p&gt;</tspan></text>
<text x="13" y="78"><tspan fill="#2a3fd0">&lt;p&gt;&lt;i&gt;</tspan>Hello World Wide Web!<tspan fill="#2a3fd0">&lt;/i&gt;&lt;/p&gt;</tspan></text>
<text x="13" y="86"><tspan fill="#2a3fd0">&lt;p&gt;&lt;u&gt;</tspan>Hello World Wide Web!<tspan fill="#2a3fd0">&lt;/u&gt;&lt;/p&gt;</tspan></text>
<text x="13" y="94"><tspan fill="#2a3fd0">&lt;p&gt;</tspan>This is my first web page.<tspan fill="#2a3fd0">&lt;/p&gt;</tspan></text>
<text x="13" y="102"><tspan fill="#2a3fd0">&lt;p&gt;</tspan>HTML tags can give <tspan fill="#2a3fd0">&lt;b&gt;&lt;i&gt;</tspan>various<tspan fill="#2a3fd0">&lt;/i&gt;&lt;/b&gt;</tspan></text>
<text x="13" y="110"><tspan fill="#2a3fd0">&lt;u&gt;</tspan>looks and format<tspan fill="#2a3fd0">&lt;/u&gt;</tspan> to the content of this web page.<tspan fill="#2a3fd0">&lt;/p&gt;</tspan></text>
</g>
</svg>
<p class="cap" style="left:1627px;top:780.5px">Creating A Simple<br>Website Using Html Css<br>Step By Step - vrogue.co</p>

<!-- scrollbar -->
<div class="abs" style="left:1900px;top:0;width:18px;height:925px;background:#fdfdfd"></div>
<svg class="abs" style="left:1900px;top:0" width="18" height="925" viewBox="0 0 18 925">
<path d="M3 12 9 3 16 12Z" fill="#8a8a8a"/>
<rect x="4" y="21" width="11" height="413" rx="5" fill="#8a8a8a"/>
<path d="M3 911H16L9.5 920Z" fill="#7c7c7c"/>
</svg>
</body>
</html>
